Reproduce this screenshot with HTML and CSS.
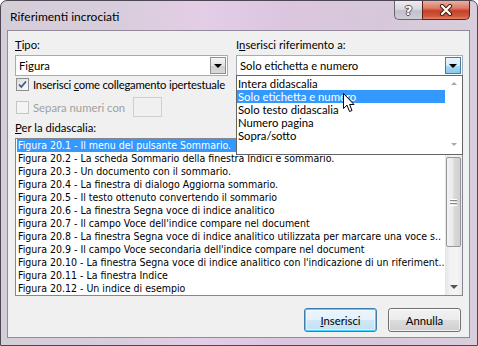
FILE: index.html
```html
<!DOCTYPE html>
<html lang="it">
<head>
    <meta charset="UTF-8">
    <title>Riferimenti incrociati</title>
    <link rel="stylesheet" href="styles.css">
</head>
<body>

<div class="window">
    <div class="titlebar">
        <span class="title">Riferimenti incrociati</span>
        <div class="caption-buttons">
            <span class="cap help">?</span>
            <span class="cap close">
                <svg width="16" height="12" viewBox="0 0 16 12">
                    <path d="M4 2 L12 10 M12 2 L4 10" stroke="#4a1a12" stroke-width="4.2" stroke-linecap="round"/>
                    <path d="M4 2 L12 10 M12 2 L4 10" stroke="#fff" stroke-width="2.2" stroke-linecap="round"/>
                </svg>
            </span>
        </div>
    </div>

    <div class="client">
        <div class="top-grid">
            <div class="col">
                <label class="field-label"><u>T</u>ipo:</label>
                <div class="combo">
                    <span class="combo-text">Figura</span>
                    <span class="combo-btn"><i class="tri"></i></span>
                </div>
                <div class="check-row">
                    <span class="box">
                        <svg width="11" height="11" viewBox="0 0 11 11">
                            <path d="M2 5.5 L4.3 8 L9 2.5" fill="none" stroke="#3d5a8a" stroke-width="1.8"/>
                        </svg>
                    </span>
                    <span class="tight">Inserisci <u>c</u>ome collegamento ipertestuale</span>
                </div>
                <div class="check-row separa disabled">
                    <span class="box"></span>
                    <span>Separa numeri con</span>
                    <span class="small-input"></span>
                </div>
            </div>
            <div class="col">
                <label class="field-label">I<u>n</u>serisci riferimento a:</label>
                <div class="combo open">
                    <span class="combo-text">Solo etichetta e numero</span>
                    <span class="combo-btn"><i class="tri"></i></span>
                    <div class="dropdown">
                        <ul>
                            <li>Intera didascalia</li>
                            <li class="selected">Solo etichetta e numero</li>
                            <li>Solo testo didascalia</li>
                            <li>Numero pagina</li>
                            <li>Sopra/sotto</li>
                        </ul>
                        <div class="drop-scroll">
                            <i class="tri up light"></i>
                            <i class="tri light"></i>
                        </div>
                        <svg class="cursor" width="13" height="20" viewBox="0 0 13 20">
                            <path d="M0.5 0.5 L0.5 15.5 L4 12.2 L6.5 18.5 L9 17.5 L6.6 11.5 L11 11.5 Z" fill="#fff" stroke="#000" stroke-width="1"/>
                        </svg>
                    </div>
                </div>
            </div>
        </div>

        <label class="field-label caption-label"><u>P</u>er la didascalia:</label>
        <div class="listbox">
            <ul>
                <li class="selected">Figura 20.1 - Il menu del pulsante Sommario.</li>
                <li>Figura 20.2 - La scheda Sommario della finestra Indici e sommario.</li>
                <li>Figura 20.3 - Un documento con il sommario.</li>
                <li>Figura 20.4 - La finestra di dialogo Aggiorna sommario.</li>
                <li>Figura 20.5 - Il testo ottenuto convertendo il sommario</li>
                <li>Figura 20.6 - La finestra Segna voce di indice analitico</li>
                <li>Figura 20.7 - Il campo Voce dell'indice compare nel document</li>
                <li>Figura 20.8 - La finestra Segna voce di indice analitico utilizzata per marcare una voce s..</li>
                <li>Figura 20.9 - Il campo Voce secondaria dell'indice compare nel document</li>
                <li>Figura 20.10 - La finestra Segna voce di indice analitico con l'indicazione di un riferiment..</li>
                <li>Figura 20.11 - La finestra Indice</li>
                <li>Figura 20.12 - Un indice di esempio</li>
            </ul>
            <div class="vscroll">
                <span class="sb-btn"><i class="tri up"></i></span>
                <div class="sb-track">
                    <span class="sb-thumb"><i class="grip"></i></span>
                </div>
                <span class="sb-btn"><i class="tri"></i></span>
            </div>
        </div>

        <div class="buttons">
            <button class="default"><u>I</u>nserisci</button>
            <button>Annulla</button>
        </div>
    </div>
</div>

</body>
</html>
```

FILE: styles.css
```css
* {
    box-sizing: border-box;
}
body {
    margin: 0;
    font-family: Lato, "Liberation Sans", sans-serif;
    font-size: 11.3px;
    color: #000;
    background: #fff;
}
.window {
    width: 478px;
    height: 346px;
    border: 1px solid #4d4653;
    border-radius: 7px 7px 0 0;
    padding: 0 7px 7px 6px;
    display: flex;
    flex-direction: column;
    background: linear-gradient(90deg, #d4ced8 0%, #d8cddc 25%, #e4cde6 42%, #dcc6df 60%, #d6c8da 80%, #d9cedc 100%);
}
.titlebar {
    height: 29px;
    display: flex;
    justify-content: space-between;
    align-items: flex-start;
}
.title {
    padding: 8px 0 0 3px;
    line-height: 15px;
    font-size: 12px;
}
.caption-buttons {
    display: flex;
}
.cap {
    height: 19px;
    display: flex;
    align-items: center;
    justify-content: center;
}
.help {
    width: 28px;
    border: 1px solid #6a6472;
    border-top: none;
    border-right: none;
    border-radius: 0 0 0 5px;
    background: linear-gradient(#eeecf1, #d9d7df 45%, #c2c0ca 55%, #cfcdd6);
    color: #fff;
    font-weight: bold;
    font-size: 13px;
    font-family: "DejaVu Sans", sans-serif;
    text-shadow: 1px 0 #55525c, -1px 0 #55525c, 0 1px #55525c, 0 -1px #55525c;
}
.close {
    width: 48px;
    border: 1px solid #5e241a;
    border-top: none;
    border-radius: 0 0 5px 0;
    background: linear-gradient(#eab0a2, #dc7a64 40%, #c53f27 55%, #cf5a3e 85%, #e2866b);
}
.client {
    flex: 1;
    background: #f0f0f0;
    border: 1px solid #958a9a;
    padding: 6px 6px 0 7px;
    display: flex;
    flex-direction: column;
}
.top-grid {
    display: grid;
    grid-template-columns: 213px 227px;
    column-gap: 8px;
}
.col {
    display: flex;
    flex-direction: column;
}
.field-label {
    display: block;
    line-height: 15px;
    height: 15px;
}
.combo {
    position: relative;
    height: 21px;
    margin-top: 3px;
    background: #fff;
    border: 1px solid #a5acb5;
    display: flex;
    align-items: center;
    padding-left: 3px;
}
.combo-text {
    flex: 1;
}
.combo-btn {
    width: 16px;
    height: 17px;
    margin-right: 1px;
    border: 1px solid #8f8f8f;
    background: linear-gradient(#f4f4f4, #e3e3e3 50%, #cfcfcf 51%, #d8d8d8);
    display: flex;
    align-items: center;
    justify-content: center;
}
.combo.open .combo-btn {
    border-color: #3c7fb1;
    background: linear-gradient(#e9f5fc, #d4ecf9 50%, #a9d9f2 51%, #8cc9ec);
}
.tri {
    display: block;
    width: 0;
    height: 0;
    border-left: 4px solid transparent;
    border-right: 4px solid transparent;
    border-top: 4px solid #000;
}
.tri.up {
    border-top: none;
    border-bottom: 4px solid #4d4d4d;
}
.tri.light {
    border-top-color: #a8a8a8;
    border-left-width: 3.5px;
    border-right-width: 3.5px;
    border-top-width: 3px;
}
.tri.up.light {
    border-bottom: 3px solid #a8a8a8;
}
.vscroll .tri {
    border-top-color: #555;
}
.dropdown {
    position: absolute;
    left: -1px;
    top: 19px;
    width: 227px;
    height: 80px;
    background: #fff;
    border: 1px solid #646464;
    display: flex;
    z-index: 2;
}
.dropdown ul {
    flex: 1;
    list-style: none;
    margin: 0;
    padding: 1px 0 0;
}
.dropdown li {
    height: 13px;
    line-height: 13px;
    padding-left: 1px;
}
.selected {
    background: #3399ff;
    color: #fff;
}
.drop-scroll {
    width: 17px;
    display: flex;
    flex-direction: column;
    justify-content: space-between;
    align-items: center;
    padding: 6px 0 8px;
}
.cursor {
    position: absolute;
    left: 106px;
    top: 17px;
}
.check-row {
    display: flex;
    align-items: center;
    height: 14px;
    margin-top: 1px;
    white-space: nowrap;
}
.tight {
    letter-spacing: -0.22px;
}
.box {
    flex: none;
    width: 13px;
    height: 13px;
    margin: 0 4px 0 1px;
    border: 1px solid #8e8f8f;
    background: linear-gradient(135deg, #dcdcdc, #fbfbfb);
    display: flex;
    align-items: center;
    justify-content: center;
}
.separa {
    height: 20px;
    margin-top: 6px;
}
.disabled {
    color: #a0a0a0;
}
.disabled .box {
    border-color: #c6c6c6;
    background: #f4f4f4;
}
.small-input {
    width: 29px;
    height: 20px;
    margin-left: 8px;
    border: 1px solid #cfcfcf;
    background: #f0f0f0;
}
.caption-label {
    margin-top: 3px;
}
.listbox {
    margin-top: 3px;
    height: 158px;
    border: 1px solid #828790;
    background: #fff;
    display: flex;
}
.listbox ul {
    flex: 1;
    list-style: none;
    margin: 0;
    padding: 0 0 0 1px;
    overflow: hidden;
    font-family: "DejaVu Sans Condensed", "DejaVu Sans", sans-serif;
    font-size: 10.5px;
}
.listbox li {
    height: 13px;
    line-height: 13px;
    padding-left: 1px;
    white-space: nowrap;
}
.vscroll {
    width: 17px;
    display: flex;
    flex-direction: column;
    background: linear-gradient(90deg, #e4e4e4, #f2f2f2 30%, #f4f4f4 70%, #eaeaea);
}
.sb-btn {
    height: 17px;
    display: flex;
    align-items: center;
    justify-content: center;
}
.sb-track {
    flex: 1;
    padding-top: 1px;
}
.sb-thumb {
    display: flex;
    align-items: center;
    justify-content: center;
    width: 15px;
    height: 90px;
    margin-left: 1px;
    border: 1px solid #979797;
    border-radius: 2px;
    background: linear-gradient(90deg, #f2f2f2, #eaeaea 45%, #d9d9d9 55%, #d0d0d0);
}
.grip {
    display: block;
    width: 7px;
    height: 7px;
    background: repeating-linear-gradient(#fff 0, #fff 1px, #8a8a8a 1px, #8a8a8a 2px, transparent 2px, transparent 3px);
}
.buttons {
    display: flex;
    justify-content: flex-end;
    gap: 11px;
    margin-top: 12px;
    padding-right: 2px;
}
button {
    width: 73px;
    height: 24px;
    font-family: Lato, "Liberation Sans", sans-serif;
    font-size: 11.3px;
    color: #000;
    border: 1px solid #707070;
    border-radius: 3px;
    background: linear-gradient(#f2f2f2, #ebebeb 50%, #dddddd 51%, #cfcfcf);
    box-shadow: inset 0 0 0 1px rgba(255, 255, 255, 0.7);
}
button.default {
    border-color: #3c7fb1;
    box-shadow: inset 0 0 0 1px #48d2ff, inset 0 0 0 2px rgba(255, 255, 255, 0.5);
    background: linear-gradient(#eaf6fd, #e4f2fb 50%, #cfe8f7 51%, #c2e0f3);
}
```
